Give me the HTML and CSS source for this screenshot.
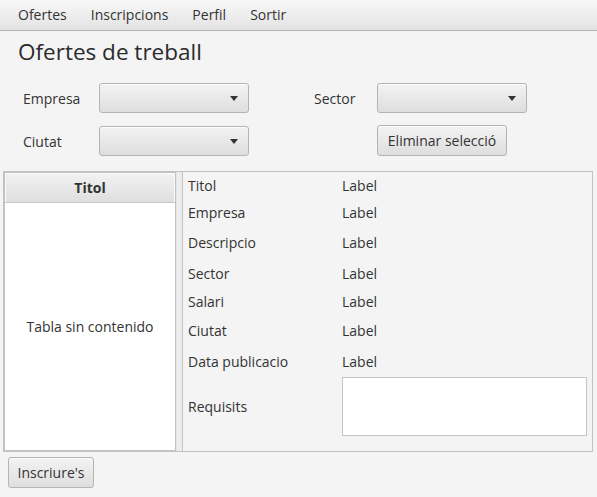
FILE: index.html
```html
<!DOCTYPE html>
<html>
<head>
<meta charset="utf-8">
<link rel="stylesheet" href="styles.css">
</head>
<body>
<div class="menubar">
  <span class="menu">Ofertes</span>
  <span class="menu">Inscripcions</span>
  <span class="menu">Perfil</span>
  <span class="menu">Sortir</span>
</div>
<h1 class="title">Ofertes de treball</h1>
<div class="filters">
  <span class="flabel">Empresa</span>
  <div class="combo"><span class="arrow"></span></div>
  <span></span>
  <span class="flabel">Sector</span>
  <div class="combo"><span class="arrow"></span></div>
  <span class="flabel">Ciutat</span>
  <div class="combo"><span class="arrow"></span></div>
  <span></span>
  <span></span>
  <button class="btn btn-clear">Eliminar selecció</button>
</div>
<div class="split">
  <div class="table">
    <div class="thead">Titol</div>
    <div class="tbody">Tabla sin contenido</div>
  </div>
  <div class="divider"></div>
  <div class="detail">
    <span>Titol</span><span>Label</span>
    <span>Empresa</span><span>Label</span>
    <span>Descripcio</span><span>Label</span>
    <span>Sector</span><span>Label</span>
    <span>Salari</span><span>Label</span>
    <span>Ciutat</span><span>Label</span>
    <span>Data publicacio</span><span>Label</span>
    <span>Requisits</span><div class="textarea"></div>
  </div>
</div>
<div class="footer">
  <button class="btn btn-sign">Inscriure's</button>
</div>
</body>
</html>
```

FILE: styles.css
```css
html, body {
  margin: 0;
  padding: 0;
}
body {
  width: 597px;
  height: 497px;
  background: #f4f4f4;
  font-family: "Open Sans", "Noto Sans", sans-serif;
  font-size: 14px;
  color: #333333;
  overflow: hidden;
}
.menubar {
  height: 30px;
  border-bottom: 1px solid #b3b3b3;
  background: linear-gradient(#f8f8f8, #e3e3e3);
  display: flex;
  align-items: center;
  padding-left: 6px;
}
.menu {
  padding: 0 12px;
  line-height: 20px;
}
.title {
  margin: 6px 0 0 18px;
  font-size: 22.5px;
  font-weight: normal;
  line-height: 29px;
  color: #2b2b2b;
}
.filters {
  margin-top: 17px;
  padding-left: 23px;
  display: grid;
  grid-template-columns: 76px 150px 65px 63px 150px;
  grid-auto-rows: 30px;
  row-gap: 13px;
  align-items: center;
}
.combo {
  position: relative;
  box-sizing: border-box;
  height: 30px;
  border: 1px solid #b4b4b4;
  border-radius: 3px;
  background: linear-gradient(#f3f3f3, #dedede);
  box-shadow: inset 0 1px 0 rgba(255,255,255,0.7);
}
.arrow {
  position: absolute;
  right: 10px;
  top: 12px;
  width: 0;
  height: 0;
  border-left: 4.5px solid transparent;
  border-right: 4.5px solid transparent;
  border-top: 5px solid #333;
}
.btn {
  box-sizing: border-box;
  height: 31px;
  border: 1px solid #b4b4b4;
  border-radius: 3px;
  background: linear-gradient(#f3f3f3, #dedede);
  box-shadow: inset 0 1px 0 rgba(255,255,255,0.7);
  font-family: inherit;
  font-size: 14px;
  color: #333;
  padding: 0 8px;
  margin: 0;
}
.btn-clear {
  width: 130px;
  justify-self: start;
  margin-top: -1px;
}
.split {
  margin: 15px 4px 0 3px;
  height: 281px;
  box-sizing: border-box;
  border: 1px solid #c2c2c2;
  display: flex;
}
.table {
  width: 172px;
  box-sizing: border-box;
  border: 1px solid #c2c2c2;
  background: #fff;
  display: flex;
  flex-direction: column;
}
.thead {
  height: 30px;
  box-sizing: border-box;
  border-bottom: 1px solid #c8c8c8;
  background: linear-gradient(#f2f2f2, #dfdfdf);
  box-shadow: inset 1px 1px 0 #fafafa, inset -1px 0 0 #fafafa;
  font-weight: bold;
  display: flex;
  align-items: center;
  justify-content: center;
}
.tbody {
  flex: 1;
  display: flex;
  align-items: center;
  justify-content: center;
}
.divider {
  width: 7px;
  box-sizing: border-box;
  border-right: 1px solid #c6c6c6;
  background: linear-gradient(to right, #e2e2e2, #f0f0f0 40%, #e6e6e6);
}
.detail {
  flex: 1;
  background: #f4f4f4;
  display: grid;
  grid-template-columns: 154px 1fr;
  grid-template-rows: 26px 28px 32px 30px 26px 32px 30px 60px;
  align-items: center;
  padding: 0 5px 0 5px;
}
.textarea {
  height: 59px;
  box-sizing: border-box;
  border: 1px solid #c4c4c4;
  background: #fff;
}
.footer {
  padding: 5px 0 0 8px;
}
.btn-sign {
  width: 86px;
}
```
